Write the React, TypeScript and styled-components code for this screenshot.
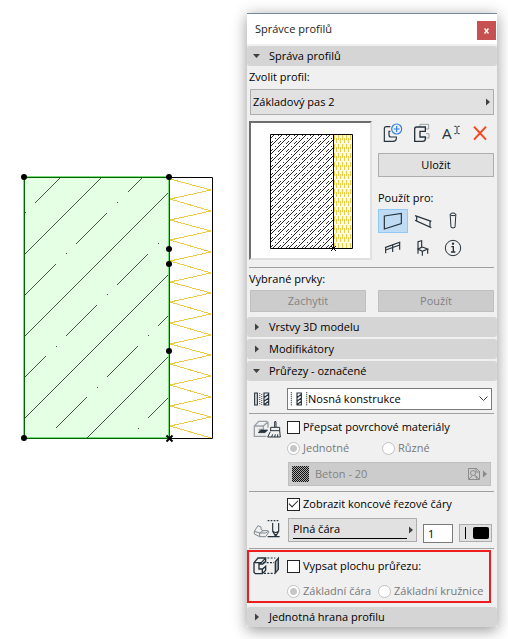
import React from "react";
import styled, { createGlobalStyle, css } from "styled-components";

const ink = "#26323c";
const insulationYellow = "#edcb45";

const GlobalStyle = createGlobalStyle`
  *, *::before, *::after { box-sizing: border-box; }
  body { margin: 0; background: #fff; }
  body, button, input, select {
    font-family: "Open Sans", "Noto Sans", sans-serif;
    font-size: 11px;
    line-height: 14px;
    color: #000;
  }
  svg { display: block; flex: none; }
`;

const Page = styled.main`
  display: grid;
  grid-template-columns: minmax(0, 1fr) 250px;
  align-items: start;
  padding: 13px 11px 12px 0;
`;

const Canvas = styled.section`
  display: flex;
  justify-content: center;
  padding: 158px 11px 0 0;
`;

const Palette = styled.aside`
  border-top: 1px solid #758a9b;
  background: #f0f0f0;
  box-shadow: 0 3px 14px rgba(0, 0, 0, 0.42);
`;

const TitleBar = styled.header`
  display: flex;
  align-items: center;
  justify-content: space-between;
  height: 30px;
  padding: 0 1px 0 8px;
  margin-bottom: 2px;
  background: #fff;
`;

const Title = styled.h1`
  margin: 0;
  font-size: 11px;
  font-weight: 400;
  line-height: 16px;
  color: #222;
`;

const CloseButton = styled.button`
  display: grid;
  place-items: center;
  align-self: flex-end;
  width: 19px;
  height: 19px;
  padding: 0;
  margin-bottom: 4px;
  border: 0;
  background: #c75050;
`;

const Groups = styled.div`
  display: flex;
  flex-direction: column;
`;

const GroupHeader = styled.button<{ $stacked?: boolean }>`
  display: flex;
  align-items: center;
  gap: 9px;
  width: 100%;
  height: 20px;
  padding: 0 6px;
  margin-bottom: ${(p) => (p.$stacked ? "2px" : "0")};
  border: 0;
  border-radius: 3px;
  background: #d5d5d5;
  text-align: left;
`;

const GroupBody = styled.div`
  padding: 0 3px 4px 2px;
`;

const Caption = styled.label`
  display: flex;
  align-items: center;
  height: 22px;
`;

const TargetCaption = styled(Caption)`
  margin-top: 10px;
`;

const Divider = styled.hr`
  height: 1px;
  margin: 0;
  border: 0;
  background: #a0a0a0;
`;

const boxed = css`
  border: 1px solid #adadad;
  background: #e1e1e1;
`;

const Picker = styled.div`
  ${boxed}
  display: flex;
  align-items: center;
  height: 26px;
  margin: 1px 0 0 1px;
  padding: 0 2px;
`;

const CompositePicker = styled(Picker)`
  height: 22px;
  margin: 0 2px 0 0;
  padding: 0 3px 0 2px;
  border-color: #7a7a7a;
  background: #fff;
`;

const MaterialPicker = styled(Picker)`
  height: 24px;
  margin: 0 3px 0 1px;
  border-color: #bfbfbf;
  background: #cccccc;
`;

const Select = styled.select`
  appearance: none;
  flex: 1;
  min-width: 0;
  padding: 0;
  border: 0;
  outline: 0;
  background: transparent;
  &:disabled { color: #838383; opacity: 1; }
`;

const ProfileRow = styled.div`
  display: grid;
  grid-template-columns: 123px 116px;
  justify-content: space-between;
  padding: 6px 0 7px;
`;

const Preview = styled.div`
  display: grid;
  place-items: center;
  height: 139px;
  padding: 1px 0 0 1px;
  border: 2px solid;
  border-color: #6d6d6d #e0e0e0 #e0e0e0 #6d6d6d;
  background: #fff;
`;

const Actions = styled.div`
  display: flex;
  flex-direction: column;
`;

const ToolRow = styled.div`
  display: grid;
  grid-template-columns: repeat(4, 1fr);
  height: 24px;
  margin-bottom: 8px;
`;

const TargetGrid = styled.div`
  display: grid;
  grid-template-columns: repeat(3, 30px);
  grid-auto-rows: 24px;
  gap: 3px 0;
`;

const IconButton = styled.button<{ $active?: boolean }>`
  display: grid;
  place-items: center;
  padding: 0;
  border: 1px solid ${(p) => (p.$active ? "#90c8f6" : "transparent")};
  background: ${(p) => (p.$active ? "#bfdcf4" : "transparent")};
`;

const Button = styled.button`
  ${boxed}
  height: 24px;
  padding: 0;
  &:disabled {
    height: 22px;
    background: #cccccc;
    border-color: #bfbfbf;
    color: #838383;
  }
`;

const ButtonPair = styled.div`
  display: grid;
  grid-template-columns: 1fr 1fr;
  gap: 12px;
  padding: 0 0 1px 1px;
`;

const settingPadding = { single: "7px 0 3px", material: "6px 0 5px", line: "5px 0" };

const Setting = styled.div<{ $kind: keyof typeof settingPadding }>`
  display: grid;
  grid-template-columns: 38px minmax(0, 1fr);
  padding: ${(p) => settingPadding[p.$kind]};
`;

const SettingIcon = styled.div<{ $place?: "center" | "flex-end" }>`
  display: flex;
  align-items: ${(p) => p.$place ?? "flex-start"};
  padding: ${(p) => (p.$place === "flex-end" ? "0 0 4px 4px" : "0 0 0 4px")};
`;

const Fields = styled.div`
  display: flex;
  flex-direction: column;
  gap: 7px;
`;

const Choice = styled.label<{ $muted?: boolean }>`
  display: flex;
  align-items: center;
  gap: 3px;
  height: 14px;
  white-space: nowrap;
  color: ${(p) => (p.$muted ? "#787878" : "#000")};
`;

const CheckBox = styled.input.attrs({ type: "checkbox" })`
  appearance: none;
  display: grid;
  place-items: center;
  width: 13px;
  height: 13px;
  flex: none;
  margin: 0;
  border: 1px solid #222;
  background: #fff;
  &:checked::after {
    content: "";
    width: 9px;
    height: 5px;
    margin-bottom: 3px;
    border: solid #222;
    border-width: 0 0 1px 1px;
    rotate: -45deg;
  }
`;

const Radio = styled.input.attrs({ type: "radio" })`
  appearance: none;
  width: 13px;
  height: 13px;
  flex: none;
  margin: 0;
  border: 1px solid #c2c2c2;
  border-radius: 50%;
  background: #fff;
  &:checked { background: radial-gradient(circle, #c6c6c6 3px, #fff 4px); }
`;

const RadioPair = styled.div<{ $first: number }>`
  display: grid;
  grid-template-columns: ${(p) => p.$first}px 1fr;
`;

const LineRow = styled.div`
  display: grid;
  grid-template-columns: minmax(0, 1fr) 30px 33px;
  gap: 6px;
  height: 25px;
  padding: 0 2px 0 1px;
`;

const LinePicker = styled.div`
  ${boxed}
  display: grid;
  grid-template-columns: minmax(0, 1fr) 7px;
  align-items: center;
  height: 24px;
  padding: 0 2px 0 4px;
`;

const LineSample = styled.div`
  display: flex;
  flex-direction: column;
  border-bottom: 1px solid #000;
  padding-bottom: 2px;
`;

const PenNumber = styled.input`
  width: 100%;
  height: 19px;
  margin-top: 6px;
  padding: 0 4px;
  border: 1px solid #7a7a7a;
  background: #fff;
`;

const PenButton = styled.button`
  ${boxed}
  display: flex;
  align-items: center;
  justify-content: space-between;
  height: 18px;
  margin-top: 6px;
  padding: 0 2px 0 5px;
`;

const Highlight = styled.div`
  display: grid;
  grid-template-columns: 38px minmax(0, 1fr);
  margin: 1px 3px 0 -2px;
  padding: 4px 0 3px 0;
  border: 2px solid #ee1c1c;
`;

const HighlightFields = styled(Fields)`
  padding-top: 3px;
  gap: 11px;
`;

function Arrow({ down = false, muted = false }) {
  return (
    <svg width="7" height="8" viewBox="0 0 7 8" fill={muted ? "#8a8a8a" : "#404040"} aria-hidden>
      <path d={down ? "M0 2H7L3.5 6Z" : "M2 0.5V7.5L6 4Z"} />
    </svg>
  );
}

type IconProps = { w: number; h: number; box: string; children: React.ReactNode };

function Icon({ w, h, box, children }: IconProps) {
  return (
    <svg width={w} height={h} viewBox={box} fill="none" stroke={ink} strokeWidth="3.5" aria-hidden>
      {children}
    </svg>
  );
}

const NewIcon = () => (
  <Icon w={20} h={20} box="36 25 60 60">
    <path d="M58 36H46Q40 36 40 42V80H66Q76 79 76 72V67H60Q54 67 54 60V50H58" />
    <circle cx="77" cy="43" r="15" stroke="#2f7de8" fill="#f0f0f0" />
    <path d="M77 34V52M68 43H86" stroke="#2f7de8" />
  </Icon>
);

const DuplicateIcon = () => (
  <Icon w={18} h={20} box="129 25 54 60">
    <path d="M150 36V29H176V43H166M168 57H177V70H167" stroke="#9aa1a6" strokeWidth="3" />
    <path d="M166 37H140Q134 37 134 43V80H158Q166 80 166 73V67H150V50H166Z" strokeWidth="4" />
  </Icon>
);

const RenameIcon = () => (
  <Icon w={18} h={18} box="213 27 54 54">
    <text x="213" y="73" fontSize="46" fill={ink} stroke="none">A</text>
    <path d="M250 34H255L258 37L261 34H266M258 37V53M250 56H255L258 53L261 56H266" strokeWidth="3" />
  </Icon>
);

const DeleteIcon = () => (
  <Icon w={16} h={16} box="306 30 48 48">
    <path d="M312 35L348 74M348 35L312 74" stroke="#f8461c" strokeWidth="6" />
  </Icon>
);

const WallIcon = () => (
  <Icon w={20} h={18} box="37 290 60 54">
    <path d="M41 302L92 294V325L41 341Z" />
  </Icon>
);

const BeamIcon = () => (
  <Icon w={18} h={18} box="129 290 54 54">
    <path d="M132 301L181 318M137 303V317L177 335V316M132 315L137 317M175 334L181 337" />
  </Icon>
);

const ColumnIcon = () => (
  <Icon w={10} h={18} box="232 292 30 54">
    <ellipse cx="247" cy="299" rx="8" ry="4" strokeWidth="3" />
    <path d="M238.500 299L241 338Q247 342 253 338L255.500 299" strokeWidth="3" />
  </Icon>
);

const RailingIcon = () => (
  <Icon w={18} h={16} box="39 378 54 48">
    <path d="M42 401L88 384M44 408L86 393M44 400V418M65 391V414M86 385V407" />
  </Icon>
);

const ChairIcon = () => (
  <Icon w={14} h={18} box="138 374 42 54">
    <path d="M144 418V382L155 379V399L144 404L157 411L173 404L157 398M157 411V424M173 404V418" />
  </Icon>
);

const InfoIcon = () => (
  <Icon w={18} h={18} box="225 374 54 54">
    <circle cx="252" cy="401" r="23" strokeWidth="3" />
    <path d="M247 397H253V413M246 413H259" strokeWidth="4" />
    <circle cx="252" cy="388" r="3.5" fill={ink} stroke="none" />
  </Icon>
);

const LayersIcon = () => (
  <Icon w={17} h={14} box="42 34 51 42">
    <path d="M47 37H55V73H47Z" />
    <path d="M62 37V74M68 40V74" stroke="#59636b" strokeDasharray="3 3" />
    <path d="M75 37H89V73H75ZM75 51L89 41M75 62L89 52M75 72L89 62" />
  </Icon>
);

const SurfaceIcon = () => (
  <Icon w={28} h={18} box="36 115 84 54">
    <path d="M81 138V122L77 119H53L40 133V164H76M40 133H67L80 121M67 133V143H55V153" stroke="#9aa0a5" strokeWidth="4" />
    <path d="M52 153L60 145H80L72 153Z" fill={ink} strokeWidth="2" />
    <path d="M101 136V120H105V136M89 148V137H116V148M89 147H116L118 166H80L88 150M92 166L95 158M101 166L103 158M110 166V158" strokeWidth="3" />
  </Icon>
);

const CutLineIcon = () => (
  <Icon w={27} h={20} box="36 102 81 60">
    <path d="M40 139L51 122L60 126V133L66 137H80L83 142L74 155H56L40 147ZM40 139L56 144V155M56 144H74L83 138M56 144L66 137" stroke="#7f878d" strokeWidth="3" />
    <path d="M80 107H116" strokeDasharray="5 4" />
    <path d="M80 155H116M95 114V139L104 154L113 139V114M95 139L104 143L113 139M102 149H106" />
  </Icon>
);

const AreaIcon = () => (
  <Icon w={27} h={19} box="35 209 81 57">
    <path d="M38 229L50 215H73V225L64 233H53V248H64L73 240V252L63 262H42L38 258ZM38 229H60L72 216M63 248V261" strokeWidth="4" />
    <path d="M78 215H102M66 229H98M68 261H100" strokeDasharray="6 4" />
    <path d="M102 226L111 216V249L102 260Z" fill="#a5abb0" strokeWidth="4" />
  </Icon>
);

const zigzag = Array.from({ length: 13 }, (_, i) =>
  `L170 ${Math.round(178.5 + i * 20.65)} L211 ${Math.round(190 + i * 20.65)}`
).join(" ").replace(/^L/, "M");

const nodes = [[24, 177], [169, 177], [169, 249], [169, 264], [169, 351], [24, 438]];
const dots = [[25, 212], [117, 202], [66, 253], [158, 243], [107, 294], [56, 346], [148, 335], [97, 387], [138, 428]];

function SectionDrawing() {
  return (
    <svg width="200" height="272" viewBox="18 171 200 272" fill="none" role="img">
      <path d="M169 177.5H212.5V438.5H169" stroke="#000" />
      <path d={zigzag} stroke={insulationYellow} shapeRendering="crispEdges" />
      <rect x="24" y="177" width="145" height="261" fill="#e4ffe4" />
      <path d="M23.5 438V176.5H168.5V437.5H24" stroke="#7bdc7b" />
      <path d="M24.5 438.5V177.5H169.5V438.5Z" stroke="#006400" />
      <g stroke="#3f5c43" shapeRendering="crispEdges">
        <path d="M25 254L101 178M25 336L168 193M25 418L168 275M87 438L168 357" />
        <path d="M35 203L60 178M128 192L142 178M76 244L107 213M25 295L56 264M117 285L148 254M66 336L97 305M25 377L46 356M158 326L168 316M107 377L138 346M56 428L87 397M148 418L168 398" />
      </g>
      {dots.map(([x, y]) => (
        <rect key={`${x}-${y}`} x={x} y={y} width="1" height="1" fill="#3f5c43" />
      ))}
      {nodes.map(([x, y]) => (
        <circle key={`${x}-${y}`} cx={x} cy={y} r="3" fill="#000" />
      ))}
      <path d="M166.500 435.500L172.500 441.500M172.500 435.500L166.500 441.500" stroke="#000" strokeWidth="2" />
    </svg>
  );
}

const insulationTicks = Array.from({ length: 13 }, (_, band) =>
  Array.from({ length: 9 }, (_, column) => {
    const top = 3 + band * 9 + (column % 2 ? 3 : 0);
    return top < 112 ? { x: 65 + column * 2, y: top } : null;
  })
).flat().filter((tick) => tick !== null);

function ProfilePreview() {
  return (
    <svg width="84" height="118" viewBox="0 0 84 118" fill="none" overflow="visible" role="img">
      <defs>
        <pattern id="concrete" width="8" height="8" patternUnits="userSpaceOnUse">
          <path d="M-1 9L9 -1M-1 1L1 -1M7 9L9 7" stroke="#222" />
        </pattern>
        <pattern id="concreteDots" width="8" height="8" patternUnits="userSpaceOnUse">
          <path d="M1 3.500H2M2 2.500H3M3 1.500H4M6 6.500H7" stroke="#333" />
        </pattern>
      </defs>
      <rect x="1" y="2" width="63" height="114" fill="url(#concrete)" shapeRendering="crispEdges" />
      <rect x="1" y="2" width="63" height="114" fill="url(#concreteDots)" />
      <rect x="65" y="3" width="18" height="113" fill="#fffae6" />
      {insulationTicks.map(({ x, y }) => (
        <rect key={`${x}-${y}`} x={x} y={y} width="1" height="5" fill={insulationYellow} />
      ))}
      <path d="M1.500 2.500H83.500V116.500H1.500ZM64.500 2V117" stroke="#000" />
      <path d="M62 114L67 119M67 114L62 119" stroke="#000" />
    </svg>
  );
}

export default function App() {
  return (
    <>
      <GlobalStyle />
      <Page>
        <Canvas><SectionDrawing /></Canvas>
        <Palette>
          <TitleBar>
            <Title>Správce profilů</Title>
            <CloseButton aria-label="Zavřít">
              <svg width="5" height="6" viewBox="0 0 5 6" stroke="#fff" strokeWidth="1.5" aria-hidden>
                <path d="M0.500 0.500L4.500 5.500M4.500 0.500L0.500 5.500" />
              </svg>
            </CloseButton>
          </TitleBar>
          <Groups>
            <GroupHeader aria-expanded="true"><Arrow down />Správa profilů</GroupHeader>
            <GroupBody>
              <Caption htmlFor="profile">Zvolit profil:</Caption>
              <Picker>
                <Select id="profile"><option>Základový pas 2</option></Select>
                <Arrow />
              </Picker>
              <ProfileRow>
                <Preview><ProfilePreview /></Preview>
                <Actions>
                  <ToolRow>
                    <IconButton aria-label="Nový"><NewIcon /></IconButton>
                    <IconButton aria-label="Duplikovat"><DuplicateIcon /></IconButton>
                    <IconButton aria-label="Přejmenovat"><RenameIcon /></IconButton>
                    <IconButton aria-label="Smazat"><DeleteIcon /></IconButton>
                  </ToolRow>
                  <Button>Uložit</Button>
                  <TargetCaption as="div">Použít pro:</TargetCaption>
                  <TargetGrid>
                    <IconButton $active aria-label="Zeď"><WallIcon /></IconButton>
                    <IconButton aria-label="Trám"><BeamIcon /></IconButton>
                    <IconButton aria-label="Sloup"><ColumnIcon /></IconButton>
                    <IconButton aria-label="Zábradlí"><RailingIcon /></IconButton>
                    <IconButton aria-label="Objekt"><ChairIcon /></IconButton>
                    <IconButton aria-label="Informace"><InfoIcon /></IconButton>
                  </TargetGrid>
                </Actions>
              </ProfileRow>
              <Divider />
              <Caption as="div">Vybrané prvky:</Caption>
              <ButtonPair>
                <Button disabled>Zachytit</Button>
                <Button disabled>Použít</Button>
              </ButtonPair>
            </GroupBody>
            <GroupHeader $stacked aria-expanded="false"><Arrow />Vrstvy 3D modelu</GroupHeader>
            <GroupHeader $stacked aria-expanded="false"><Arrow />Modifikátory</GroupHeader>
            <GroupHeader aria-expanded="true"><Arrow down />Průřezy - označené</GroupHeader>
            <GroupBody>
              <Setting $kind="single">
                <SettingIcon $place="center"><LayersIcon /></SettingIcon>
                <CompositePicker>
                  <Icon w={18} h={14} box="150 37 54 42">
                    <path d="M154 38V79M200 38V79" strokeDasharray="3 3" />
                    <path d="M171 40H184V76H171ZM171 54L184 44M171 65L184 55M171 75L184 65" />
                  </Icon>
                  <Select aria-label="Použití profilu"><option>Nosná konstrukce</option></Select>
                  <svg width="9" height="6" viewBox="0 0 9 6" fill="none" stroke="#444" aria-hidden>
                    <path d="M0.500 0.500L4.500 4.500L8.500 0.500" />
                  </svg>
                </CompositePicker>
              </Setting>
              <Divider />
              <Setting $kind="material">
                <SettingIcon><SurfaceIcon /></SettingIcon>
                <Fields>
                  <Choice><CheckBox />Přepsat povrchové materiály</Choice>
                  <RadioPair $first={95}>
                    <Choice $muted><Radio name="surface" disabled defaultChecked />Jednotné</Choice>
                    <Choice $muted><Radio name="surface" disabled />Různé</Choice>
                  </RadioPair>
                  <MaterialPicker>
                    <svg width="24" height="18" viewBox="0 0 24 18" aria-hidden>
                      <defs>
                        <pattern id="concreteSwatch" width="2" height="2" patternUnits="userSpaceOnUse">
                          <rect width="2" height="2" fill="#aaa" />
                          <path d="M0 0H1V1H0ZM1 1H2V2H1Z" fill="#111" />
                        </pattern>
                      </defs>
                      <rect x="1" y="1" width="17" height="16" rx="1" fill="url(#concreteSwatch)" />
                    </svg>
                    <Select aria-label="Materiál" disabled><option>Beton - 20</option></Select>
                    <svg width="14" height="14" viewBox="0 0 14 14" fill="none" stroke="#8c8c8c" aria-hidden>
                      <path d="M9 1.500H1.500V12.500H12.500V4.500M9 1L13 5H9Z" />
                      <circle cx="6" cy="6" r="2.5" />
                      <path d="M2 12L5 9M10 12L8 8M9 9L12 12" />
                    </svg>
                    <Arrow muted />
                  </MaterialPicker>
                </Fields>
              </Setting>
              <Divider />
              <Setting $kind="line">
                <SettingIcon $place="flex-end"><CutLineIcon /></SettingIcon>
                <Fields>
                  <Choice><CheckBox defaultChecked />Zobrazit koncové řezové čáry</Choice>
                  <LineRow>
                    <LinePicker>
                      <LineSample>
                        <Select aria-label="Typ čáry"><option>Plná čára</option></Select>
                      </LineSample>
                      <Arrow />
                    </LinePicker>
                    <PenNumber aria-label="Číslo pera" defaultValue="1" />
                    <PenButton aria-label="Barva pera">
                      <svg width="24" height="12" viewBox="0 0 24 12" aria-hidden>
                        <rect x="0" y="0" width="1" height="12" />
                        <rect x="8" y="0" width="16" height="12" rx="2" />
                      </svg>
                    </PenButton>
                  </LineRow>
                </Fields>
              </Setting>
              <Divider />
              <Highlight>
                <SettingIcon><AreaIcon /></SettingIcon>
                <HighlightFields>
                  <Choice><CheckBox />Vypsat plochu průřezu:</Choice>
                  <RadioPair $first={91}>
                    <Choice $muted><Radio name="area" disabled defaultChecked />Základní čára</Choice>
                    <Choice $muted><Radio name="area" disabled />Základní kružnice</Choice>
                  </RadioPair>
                </HighlightFields>
              </Highlight>
            </GroupBody>
            <GroupHeader aria-expanded="false"><Arrow />Jednotná hrana profilu</GroupHeader>
          </Groups>
        </Palette>
      </Page>
    </>
  );
}
